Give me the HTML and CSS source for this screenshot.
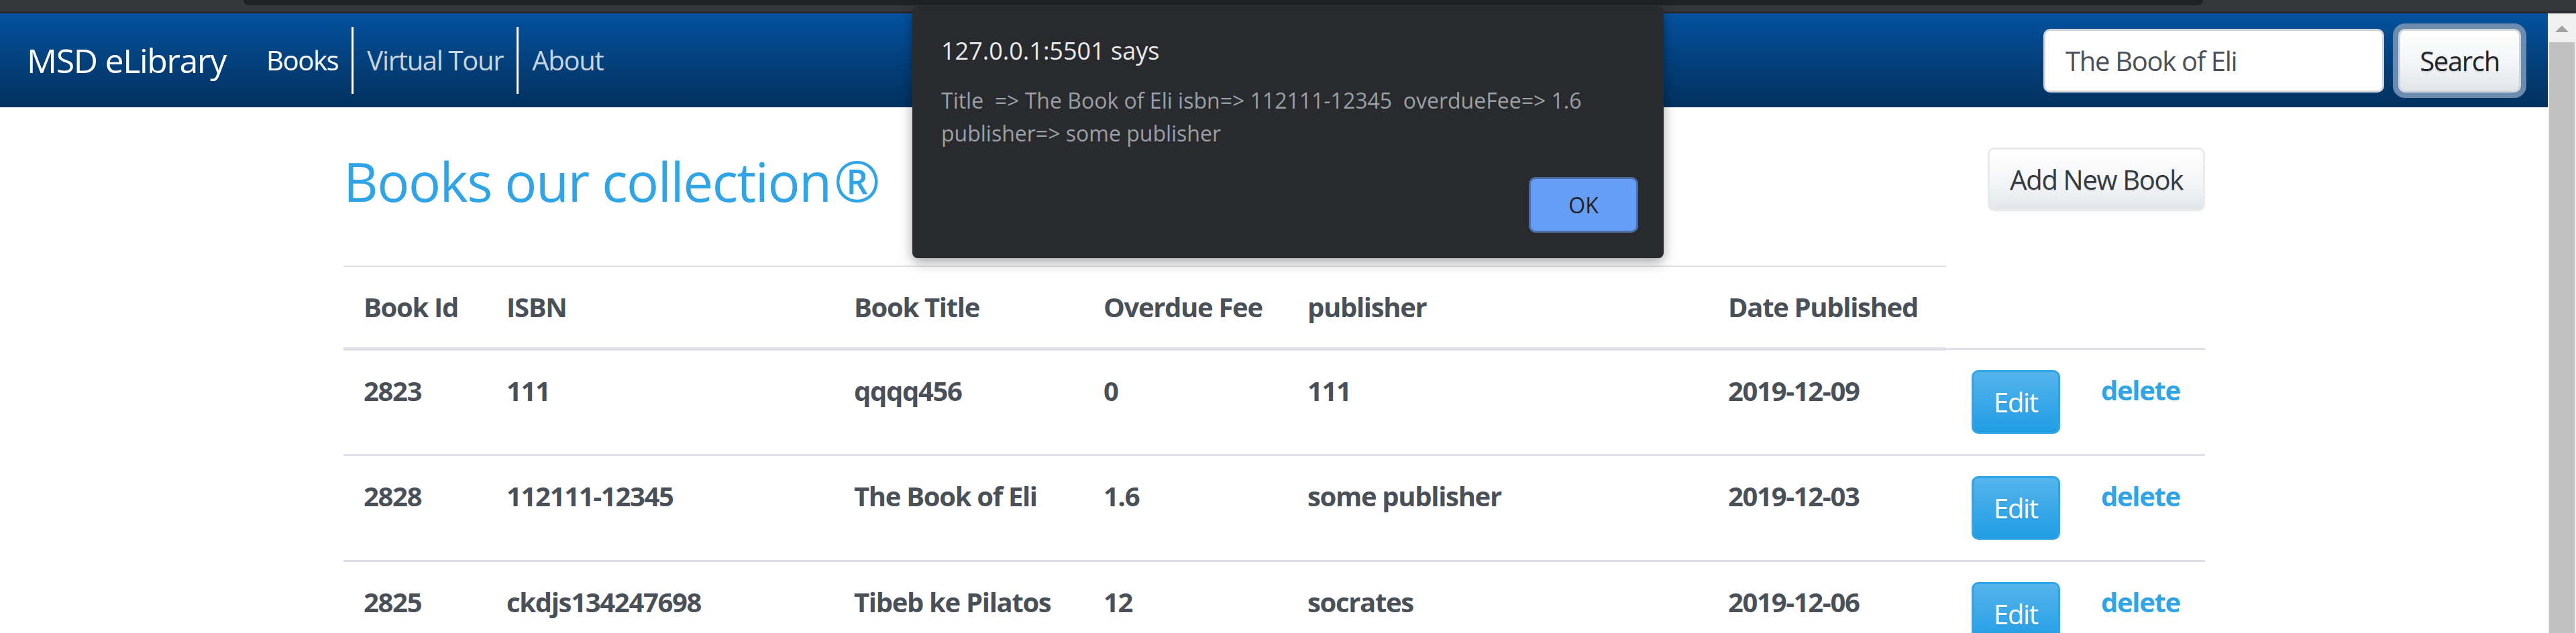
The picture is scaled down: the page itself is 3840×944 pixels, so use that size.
FILE: index.html
```html
<!DOCTYPE html>
<html lang="en">
<head>
<meta charset="utf-8">
<title>MSD eLibrary</title>
<link rel="stylesheet" href="styles.css">
</head>
<body>
<div class="chrome"><div class="omnibox"></div></div>
<div class="viewport">
  <div class="page">
    <nav class="navbar">
      <a class="brand" href="#">MSD eLibrary</a>
      <ul class="nav">
        <li class="nav-item divided"><a class="nav-link active" href="#">Books</a></li>
        <li class="nav-item divided"><a class="nav-link" href="#">Virtual Tour</a></li>
        <li class="nav-item"><a class="nav-link" href="#">About</a></li>
      </ul>
      <form class="search">
        <input class="search-input" type="text" value="The Book of Eli">
        <button class="btn btn-search" type="button">Search</button>
      </form>
    </nav>
    <main class="container">
      <div class="title-row">
        <h2 class="title">Books our collection<span class="reg">®</span></h2>
        <button class="btn btn-light" type="button">Add New Book</button>
      </div>
      <table class="table">
        <colgroup>
          <col class="c-id"><col class="c-isbn"><col class="c-title"><col class="c-fee"><col class="c-pub"><col class="c-date"><col class="c-edit"><col class="c-del">
        </colgroup>
        <thead>
          <tr><th>Book Id</th><th>ISBN</th><th>Book Title</th><th>Overdue Fee</th><th>publisher</th><th>Date Published</th></tr>
        </thead>
        <tbody>
          <tr><td>2823</td><td>111</td><td>qqqq456</td><td>0</td><td>111</td><td>2019-12-09</td><td class="edit-cell"><button class="btn btn-primary" type="button">Edit</button></td><td><a class="delete" href="#">delete</a></td></tr>
          <tr><td>2828</td><td>112111-12345</td><td>The Book of Eli</td><td>1.6</td><td>some publisher</td><td>2019-12-03</td><td class="edit-cell"><button class="btn btn-primary" type="button">Edit</button></td><td><a class="delete" href="#">delete</a></td></tr>
          <tr><td>2825</td><td>ckdjs134247698</td><td>Tibeb ke Pilatos</td><td>12</td><td>socrates</td><td>2019-12-06</td><td class="edit-cell"><button class="btn btn-primary" type="button">Edit</button></td><td><a class="delete" href="#">delete</a></td></tr>
        </tbody>
      </table>
    </main>
  </div>
  <div class="scrollbar">
    <span class="scroll-arrow"></span>
    <div class="scroll-thumb"></div>
  </div>
</div>
<div class="dialog" role="alertdialog">
  <div class="dialog-title">127.0.0.1:5501 says</div>
  <div class="dialog-message">Title&nbsp; =&gt; The Book of Eli isbn=&gt; 112111-12345&nbsp; overdueFee=&gt; 1.6<br>publisher=&gt; some publisher</div>
  <div class="dialog-actions"><button class="dialog-ok" type="button">OK</button></div>
</div>
</body>
</html>
```
FILE: styles.css
```css
* { box-sizing: border-box; }
html, body { margin: 0; padding: 0; }
body {
  width: 3840px;
  height: 944px;
  overflow: hidden;
  font-family: "Open Sans", "Noto Sans", "Liberation Sans", sans-serif;
  font-size: 40px;
  line-height: 1.5;
  letter-spacing: -0.033em;
  color: #495057;
  background: #fff;
  position: relative;
}

/* browser chrome strip */
.chrome {
  height: 20px;
  background: #35363a;
  border-bottom: 3px solid #2a2b2e;
  position: relative;
}
.omnibox {
  margin-left: 363px;
  width: 2921px;
  height: 8px;
  background: #202124;
  border-radius: 0 0 20px 20px;
}

.viewport {
  display: flex;
  height: 924px;
}
.page {
  flex: 1;
  min-width: 0;
}

/* scrollbar */
.scrollbar {
  width: 42px;
  background: #f1f1f1;
  display: flex;
  flex-direction: column;
  align-items: center;
}
.scroll-arrow {
  margin-top: 18px;
  width: 0;
  height: 0;
  border-left: 10px solid transparent;
  border-right: 10px solid transparent;
  border-bottom: 10px solid #a3a3a3;
}
.scroll-thumb {
  margin-top: 15px;
  width: 38px;
  flex: 1;
  background: #c1c1c1;
}

/* navbar */
.navbar {
  height: 140px;
  padding: 20px 40px;
  display: flex;
  align-items: center;
  background-image: linear-gradient(#04529f, #033d76 60%, #02315f);
}
.brand {
  font-size: 50px;
  line-height: 75px;
  padding: 12px 0;
  margin-right: 40px;
  color: #fff;
  text-decoration: none;
  white-space: nowrap;
}
.nav {
  list-style: none;
  margin: 0;
  padding: 0;
  display: flex;
  flex: 1;
}
.nav-item.divided { border-right: 3px solid #fff; }
.nav-link {
  display: block;
  padding: 20px;
  line-height: 60px;
  color: rgba(255, 255, 255, 0.78);
  text-decoration: none;
}
.nav-link.active { color: #fff; }

.search {
  display: flex;
  align-items: center;
  gap: 21px;
  margin: 0;
}
.search-input {
  width: 508px;
  height: 95px;
  padding: 0 30px;
  font: inherit;
  font-size: 40px;
  letter-spacing: -0.033em;
  color: #495057;
  background: #fff;
  border: 3px solid #ced4da;
  border-radius: 10px;
  outline: none;
}

.btn {
  font: inherit;
  font-size: 40px;
  line-height: 60px;
  letter-spacing: -0.033em;
  padding: 15px 30px;
  border-radius: 10px;
  cursor: pointer;
  white-space: nowrap;
}
.btn-search {
  height: 95px;
  width: 183px;
  padding: 15px 0;
  color: #212529;
  background-image: linear-gradient(#fff, #f1f3f5 60%, #e1e5e9);
  border: 3px solid #cfd5db;
  box-shadow: 0 0 0 8px #6b8cae;
  text-shadow: 0 2px 1px rgba(0, 0, 0, 0.12);
}

/* content */
.container {
  width: 2850px;
  margin: 0 auto;
  padding: 60px 37px 0 38px;
}
.title-row {
  display: flex;
  justify-content: space-between;
  align-items: flex-start;
  height: 176px;
}
.title {
  margin: 0;
  font-size: 80px;
  font-weight: 500;
  line-height: 98px;
  letter-spacing: -0.018em;
  color: #2fa4e7;
}
.reg {
  font-size: 1.05em;
  margin-left: 4px;
}
.btn-light {
  height: 95px;
  color: #343a40;
  background-image: linear-gradient(#fff, #f3f4f6 60%, #e2e6ea);
  border: 3px solid #e8ebee;
  text-shadow: 0 2px 1px rgba(0, 0, 0, 0.1);
}

.table {
  width: 2775px;
  border-collapse: collapse;
  table-layout: fixed;
  color: #495057;
}
.c-id { width: 213px; }
.c-isbn { width: 518px; }
.c-title { width: 372px; }
.c-fee { width: 304px; }
.c-pub { width: 627px; }
.c-date { width: 355px; }
.c-edit { width: 201px; }
.c-del { width: 185px; }

.table th, .table td {
  padding: 30px;
  line-height: 60px;
  text-align: left;
  vertical-align: top;
  font-weight: 700;
  white-space: nowrap;
}
.table th {
  border-top: 2px solid #dee2e6;
  border-bottom: 5px solid #dee2e6;
}
.table td { border-top: 3px solid #dee2e6; }
.table td.edit-cell { padding-left: 38px; padding-right: 0; }

.btn-primary {
  height: 95px;
  color: #fff;
  background-image: linear-gradient(#55b4eb, #35a6e8 60%, #219de4);
  border: 3px solid #2fa4e7;
  text-shadow: 0 2px 1px rgba(0, 0, 0, 0.05);
  font-weight: 400;
}
.delete {
  color: #2fa4e7;
  text-decoration: none;
  font-weight: 700;
}

/* alert dialog overlay */
.dialog {
  position: absolute;
  left: 1360px;
  top: 9px;
  width: 1120px;
  height: 376px;
  padding: 42px 38px 38px 43px;
  background: #292a2d;
  border-radius: 8px;
  box-shadow: 0 6px 18px rgba(0, 0, 0, 0.35);
  display: flex;
  flex-direction: column;
  letter-spacing: 0;
}
.dialog-title {
  font-size: 36px;
  line-height: 50px;
  color: #e8eaed;
}
.dialog-message {
  margin-top: 24px;
  font-size: 32px;
  line-height: 49px;
  color: #9aa0a6;
}
.dialog-actions {
  margin-top: auto;
  display: flex;
  justify-content: flex-end;
}
.dialog-ok {
  width: 163px;
  height: 83px;
  font: inherit;
  font-size: 32px;
  letter-spacing: 0;
  color: #202124;
  background: #669df6;
  border: 3px solid #4d6ea3;
  border-radius: 10px;
}
```
